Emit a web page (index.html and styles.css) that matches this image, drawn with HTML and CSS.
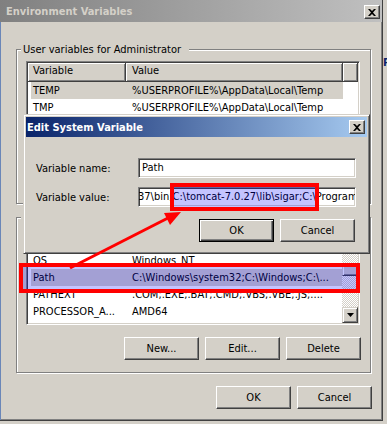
FILE: index.html
```html
<!DOCTYPE html>
<html lang="en">
<head>
  <meta charset="UTF-8">
  <title>Environment Variables</title>
  <link rel="stylesheet" href="styles.css">
</head>
<body>

  <div class="window">
    <div class="caption inactive">
      <span>Environment Variables</span>
      <button class="caption-btn" aria-label="Close">
        <svg width="8" height="7" viewBox="0 0 8 7"><path d="M0 0h2l2 2 2-2h2L5 3.5 8 7H6L4 5 2 7H0l3-3.5z"/></svg>
      </button>
    </div>

    <div class="client">
      <fieldset class="group user-group">
        <legend>User variables for Administrator</legend>
        <div class="list user-list">
          <div class="list-main">
            <div class="list-head">
              <span class="col-name">Variable</span>
              <span class="col-value">Value</span>
              <span class="col-fill"></span>
            </div>
            <div class="row selected">
              <span class="col-name">TEMP</span>
              <span class="col-value">%USERPROFILE%\AppData\Local\Temp</span>
            </div>
            <div class="row">
              <span class="col-name">TMP</span>
              <span class="col-value">%USERPROFILE%\AppData\Local\Temp</span>
            </div>
          </div>
        </div>
        <div class="buttons">
          <button class="btn">New...</button>
          <button class="btn">Edit...</button>
          <button class="btn">Delete</button>
        </div>
      </fieldset>

      <fieldset class="group sys-group">
        <legend>System variables</legend>
        <div class="list sys-list">
          <div class="list-main">
            <div class="list-head">
              <span class="col-name">Variable</span>
              <span class="col-value">Value</span>
            </div>
            <div class="row">
              <span class="col-name">OS</span>
              <span class="col-value">Windows_NT</span>
            </div>
            <div class="row selected">
              <span class="col-name">Path</span>
              <span class="col-value">C:\Windows\system32;C:\Windows;C:\...</span>
            </div>
            <div class="row">
              <span class="col-name">PATHEXT</span>
              <span class="col-value">.COM;.EXE;.BAT;.CMD;.VBS;.VBE;.JS;....</span>
            </div>
            <div class="row">
              <span class="col-name">PROCESSOR_A...</span>
              <span class="col-value">AMD64</span>
            </div>
            <div class="row">
              <span class="col-name">PROCESSOR_ID...</span>
              <span class="col-value">AMD64 Family 16 Model 4 Stepping 3, A...</span>
            </div>
          </div>
          <div class="scrollbar">
            <div class="scroll-btn">
              <svg width="7" height="4" viewBox="0 0 7 4"><path d="M3.5 0L7 4H0z"/></svg>
            </div>
            <div class="scroll-track">
              <div class="scroll-thumb"></div>
            </div>
            <div class="scroll-btn">
              <svg width="7" height="4" viewBox="0 0 7 4"><path d="M0 0h7L3.5 4z"/></svg>
            </div>
          </div>
        </div>
        <div class="buttons">
          <button class="btn">New...</button>
          <button class="btn">Edit...</button>
          <button class="btn">Delete</button>
        </div>
      </fieldset>

      <div class="buttons footer">
        <button class="btn">OK</button>
        <button class="btn">Cancel</button>
      </div>
    </div>
  </div>

  <div class="behind">P</div>

  <!-- the edit dialog sits on top of the main window -->
  <div class="dialog">
    <div class="caption active">
      <span>Edit System Variable</span>
      <button class="caption-btn" aria-label="Close">
        <svg width="8" height="7" viewBox="0 0 8 7"><path d="M0 0h2l2 2 2-2h2L5 3.5 8 7H6L4 5 2 7H0l3-3.5z"/></svg>
      </button>
    </div>
    <div class="dialog-body">
      <label class="field-label" for="var-name">Variable name:</label>
      <div class="edit" id="var-name">Path</div>
      <label class="field-label" for="var-value">Variable value:</label>
      <div class="edit scrolled" id="var-value">37\bin;C:\tomcat-7.0.27\lib\sigar;C:\Program Files\MySQL\MySQL Server 5.5\bin</div>
      <div class="dialog-buttons">
        <button class="btn default">OK</button>
        <button class="btn">Cancel</button>
      </div>
    </div>
  </div>

  <!-- annotation marks -->
  <div class="mark mark-value"></div>
  <div class="mark mark-path"></div>
  <svg class="arrow" width="387" height="424" viewBox="0 0 387 424">
    <line x1="70" y1="268" x2="168" y2="218" stroke="#f00" stroke-width="3"/>
    <polygon points="181,212 164,213 170,225" fill="#f00"/>
  </svg>

</body>
</html>
```

FILE: styles.css
```css
* {
  box-sizing: border-box;
}

body {
  background: #d4d0c8;
  color: #000;
  display: flex;
  font: 11px/13px "DejaVu Sans Condensed", "Liberation Sans", sans-serif;
  height: 424px;
  margin: 0;
  overflow: hidden;
  position: relative;
  width: 387px;
}

button {
  color: #000;
  font: inherit;
}

/* main window */
.window {
  background: #d4d0c8;
  border-bottom: 1px solid #404040;
  border-right: 1px solid #404040;
  box-shadow: inset -1px -1px #808080;
  display: flex;
  flex: none;
  flex-direction: column;
  height: 421px;
  width: 383px;
}

.caption {
  align-items: center;
  display: flex;
  flex: none;
  font-weight: bold;
  justify-content: space-between;
  white-space: nowrap;
}

.caption.inactive {
  background: linear-gradient(to right, #808080, #c0c0c0);
  color: #d4d0c8;
  height: 22px;
  padding: 0 2px 0 6px;
}

.caption.active {
  background: linear-gradient(to right, #0a246a, #a6caf0);
  color: #fff;
  height: 20px;
  padding: 0 2px 0 1px;
}

.caption-btn {
  align-items: center;
  background: #d4d0c8;
  border: 1px solid;
  border-color: #fff #404040 #404040 #fff;
  box-shadow: inset -1px -1px #808080;
  display: flex;
  height: 14px;
  justify-content: center;
  padding: 0;
  width: 16px;
}

.caption.inactive .caption-btn {
  margin-top: 2px;
}

.client {
  border-left: 1px solid #6a86b8;
  flex: 1;
  padding: 0 11px 0 15px;
}

/* group boxes */
.group {
  border: 1px solid #808080;
  box-shadow: inset 1px 1px #fff, 1px 1px #fff;
  margin: 0;
  min-width: 0;
  padding: 0 9px 12px 4px;
}

.group legend {
  background: #d4d0c8;
  line-height: 13px;
  padding: 0 8px 0 2px;
}

.user-group {
  margin-top: 21px;
}

.sys-group {
  margin-top: 7px;
}

/* list views */
.list {
  background: #fff;
  border: 1px solid;
  border-color: #808080 #fff #fff #808080;
  box-shadow: inset 1px 1px #404040, inset -1px -1px #d4d0c8;
  display: flex;
  margin-left: 5px;
  overflow: hidden;
  padding: 1px;
  width: 334px;
}

.user-list {
  height: 98px;
  margin-top: 5px;
}

.sys-list {
  height: 94px;
  margin-top: 7px;
}

.list-main {
  flex: 1;
  min-width: 0;
  overflow: hidden;
}

.list-head {
  display: flex;
  height: 19px;
}

.list-head span {
  background: #d4d0c8;
  border-bottom: 1px solid #404040;
  border-right: 1px solid #404040;
  box-shadow: inset 1px 1px #fff, inset -1px -1px #808080;
  line-height: 16px;
  padding-left: 5px;
}

.list-head .col-name {
  width: 98px;
}

.list-head .col-value {
  padding-left: 6px;
  width: 217px;
}

.list-head .col-fill {
  flex: 1;
}

.row {
  display: flex;
  height: 17px;
  line-height: 17px;
  margin-left: 3px;
  white-space: nowrap;
  width: 312px;
}

.row.selected {
  background: #d4d0c8;
}

.row span {
  overflow: hidden;
}

.row .col-name {
  padding-left: 2px;
  width: 94px;
}

.row .col-value {
  padding-left: 7px;
  width: 218px;
}

/* scroll bar */
.scrollbar {
  display: flex;
  flex: none;
  flex-direction: column;
  width: 16px;
}

.scroll-btn,
.scroll-thumb {
  background: #d4d0c8;
  border: 1px solid;
  border-color: #d4d0c8 #404040 #404040 #d4d0c8;
  box-shadow: inset 1px 1px #fff, inset -1px -1px #808080;
}

.scroll-btn {
  align-items: center;
  display: flex;
  flex: none;
  height: 16px;
  justify-content: center;
}

.scroll-track {
  background: repeating-conic-gradient(#fff 0 25%, #d4d0c8 0 50%) 0 0 / 2px 2px;
  flex: 1;
  padding-top: 16px;
}

.scroll-thumb {
  height: 11px;
}

/* push buttons */
.buttons {
  display: flex;
  gap: 6px;
  justify-content: flex-end;
  margin-top: 9px;
}

.sys-group .buttons {
  margin-top: 12px;
}

.footer {
  margin: 13px -1px 0 0;
}

.btn {
  background: #d4d0c8;
  border: 1px solid;
  border-color: #fff #404040 #404040 #fff;
  box-shadow: inset -1px -1px #808080;
  height: 23px;
  padding: 0;
  width: 75px;
}

.btn.default {
  border-color: #000;
  box-shadow: inset 1px 1px #fff, inset -1px -1px #404040, inset -2px -2px #808080;
}

/* behind the window, right edge */
.behind {
  color: #0a246a;
  flex: 1;
  font-weight: bold;
  overflow: hidden;
  padding-top: 56px;
  white-space: nowrap;
}

/* edit dialog */
.dialog {
  background: #d4d0c8;
  border: 1px solid;
  border-color: #d4d0c8 #404040 #404040 #d4d0c8;
  box-shadow: inset 1px 1px #fff, inset -1px -1px #808080;
  height: 140px;
  left: 23px;
  padding: 2px;
  position: absolute;
  top: 114px;
  width: 347px;
}

.dialog-body {
  align-items: center;
  display: grid;
  grid-template-columns: 102px 1fr;
  padding: 21px 11px 0 10px;
  row-gap: 9px;
}

.edit {
  background: #fff;
  border: 1px solid;
  border-color: #808080 #fff #fff #808080;
  box-shadow: inset 1px 1px #404040, inset -1px -1px #d4d0c8;
  height: 20px;
  line-height: 18px;
  overflow: hidden;
  padding: 0 3px;
  white-space: nowrap;
}

.edit.scrolled {
  text-indent: -4px;
}

.dialog-buttons {
  display: flex;
  gap: 6px;
  grid-column: 1 / -1;
  justify-content: flex-end;
  margin: 3px 1px 0 0;
}

/* red annotation marks */
.mark {
  background: rgba(0, 0, 255, .23);
  border: 4px solid #f00;
  position: absolute;
}

.mark-value {
  height: 28px;
  left: 170px;
  top: 183px;
  width: 149px;
}

.mark-path {
  height: 30px;
  left: 19px;
  top: 263px;
  width: 341px;
}

.arrow {
  left: 0;
  pointer-events: none;
  position: absolute;
  top: 0;
}
```
